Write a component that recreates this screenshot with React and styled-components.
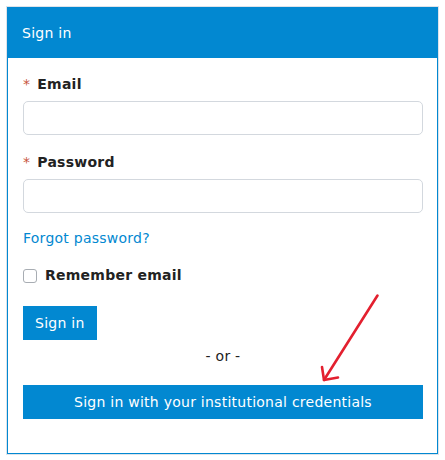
import React from "react";
import styled, { createGlobalStyle } from "styled-components";

const Global = createGlobalStyle`
  html, body { margin: 0; padding: 0; background: #fff; }
  body { font-family: "DejaVu Sans", Verdana, sans-serif; font-size: 14px; color: #222; letter-spacing: 0.25px; }
`;

const Page = styled.div`
  position: relative;
  padding: 6px;
`;

const Frame = styled.div`
  width: 431px;
  border: 1px solid #dde3ea;
`;

const Card = styled.div`
  border: 1px solid #0288d1;
  background: #fff;
`;

const Header = styled.div`
  height: 50px;
  display: flex;
  align-items: center;
  padding: 0 14px;
  background: #0288d1;
  color: #fff;
  font-size: 14px;
`;

const Body = styled.div`
  padding: 16px 14px 34px 15px;
  line-height: 20px;
`;

const Group = styled.div`
  margin-bottom: ${(p) => p.$mb || 0}px;
`;

const Label = styled.label`
  display: block;
  font-weight: bold;
  color: #222;
  margin-bottom: 7px;
`;

const Req = styled.span`
  color: #c8553d;
  font-weight: normal;
  margin-right: 7px;
`;

const Input = styled.input`
  display: block;
  box-sizing: border-box;
  width: 100%;
  height: 34px;
  border: 1px solid #d3d8de;
  border-radius: 5px;
  font: inherit;
  padding: 0 8px;
  outline: none;
`;

const Link = styled.a`
  display: block;
  color: #0288d1;
  text-decoration: none;
  margin-bottom: 17px;
`;

const CheckRow = styled.label`
  display: flex;
  align-items: center;
  gap: 8px;
  font-weight: bold;
  color: #222;
  margin-bottom: 21px;
`;

const Box = styled.span`
  width: 14px;
  height: 14px;
  box-sizing: border-box;
  border: 1px solid #a8adb3;
  border-radius: 3px;
  margin-top: 1px;
`;

const Button = styled.button`
  display: block;
  box-sizing: border-box;
  height: 34px;
  width: ${(p) => (p.$full ? "100%" : "auto")};
  padding: 0 12px;
  border: none;
  border-radius: 0;
  background: #0288d1;
  color: #fff;
  font: inherit;
  letter-spacing: inherit;
  line-height: 20px;
  cursor: pointer;
`;

const Or = styled.div`
  text-align: center;
  color: #222;
  margin: 6px 0 19px;
`;

const Arrow = styled.svg`
  position: absolute;
  left: 0;
  top: 0;
  pointer-events: none;
`;

export default function App() {
  return (
    <>
      <Global />
      <Page>
        <Frame>
          <Card>
            <Header>Sign in</Header>
            <Body>
              <Group $mb={17}>
                <Label><Req>*</Req>Email</Label>
                <Input type="text" />
              </Group>
              <Group $mb={15}>
                <Label><Req>*</Req>Password</Label>
                <Input type="password" />
              </Group>
              <Link href="#">Forgot password?</Link>
              <CheckRow>
                <Box />
                Remember email
              </CheckRow>
              <Button>Sign in</Button>
              <Or>- or -</Or>
              <Button $full>Sign in with your institutional credentials</Button>
            </Body>
          </Card>
        </Frame>
        <Arrow width="445" height="460" viewBox="0 0 445 460">
          <g stroke="#e3202f" strokeWidth="2.6" strokeLinecap="round" strokeLinejoin="round" fill="none">
            <path d="M377.5 295.5 L324 380" />
            <path d="M322 367 L324 380 L338 377.5" />
          </g>
        </Arrow>
      </Page>
    </>
  );
}
